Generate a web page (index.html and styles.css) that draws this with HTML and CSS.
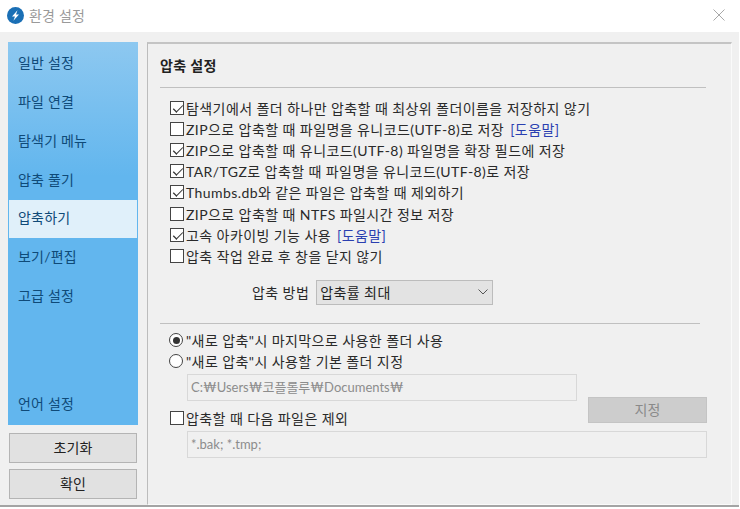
FILE: index.html
```html
<!DOCTYPE html>
<html lang="ko">
<head>
<meta charset="utf-8">
<title>환경 설정</title>
<link rel="stylesheet" href="styles.css">
</head>
<body>
<div class="window">
  <header class="titlebar">
    <svg class="logo" width="17" height="17" viewBox="0 0 17 17"><circle cx="8.500" cy="8.500" r="8.500" fill="#1a6fb5"/><path d="M10.500 3.200 5 9.400h3l-1.600 4.400 5.600-6.300H9z" fill="#fff"/></svg>
    <span class="title">환경 설정</span>
    <svg class="close" width="12" height="12" viewBox="0 0 12 12"><path d="M.5.5l11 11M11.500.5l-11 11" stroke="#a8a8a8" stroke-width="1" fill="none"/></svg>
  </header>
  <div class="body">
    <aside class="side">
      <nav class="nav">
        <div class="nav-item">일반 설정</div>
        <div class="nav-item">파일 연결</div>
        <div class="nav-item">탐색기 메뉴</div>
        <div class="nav-item">압축 풀기</div>
        <div class="nav-item active">압축하기</div>
        <div class="nav-item">보기/편집</div>
        <div class="nav-item">고급 설정</div>
        <div class="nav-item nav-last">언어 설정</div>
      </nav>
      <button class="btn">초기화</button>
      <button class="btn">확인</button>
    </aside>
    <main class="panel">
      <h1 class="heading">압축 설정</h1>
      <div class="rule rule-top"></div>
      <div class="options">
        <label class="row"><span class="box on"></span>탐색기에서 폴더 하나만 압축할 때 최상위 폴더이름을 저장하지 않기</label>
        <label class="row"><span class="box"></span>ZIP으로 압축할 때 파일명을 유니코드(UTF-8)로 저장<a class="help">[도움말]</a></label>
        <label class="row"><span class="box on"></span>ZIP으로 압축할 때 유니코드(UTF-8) 파일명을 확장 필드에 저장</label>
        <label class="row"><span class="box on"></span>TAR/TGZ로 압축할 때 파일명을 유니코드(UTF-8)로 저장</label>
        <label class="row"><span class="box on"></span>Thumbs.db와 같은 파일은 압축할 때 제외하기</label>
        <label class="row"><span class="box"></span>ZIP으로 압축할 때 NTFS 파일시간 정보 저장</label>
        <label class="row"><span class="box on"></span>고속 아카이빙 기능 사용<a class="help">[도움말]</a></label>
        <label class="row"><span class="box"></span>압축 작업 완료 후 창을 닫지 않기</label>
      </div>
      <div class="method">
        <span>압축 방법</span>
        <div class="select"><span>압축률 최대</span>
          <svg width="10" height="6" viewBox="0 0 10 6"><path d="M.5.5 5 5 9.500.5" stroke="#555" fill="none"/></svg>
        </div>
      </div>
      <div class="rule rule-mid"></div>
      <div class="folder">
        <label class="row"><span class="radio on"></span>"새로 압축"시 마지막으로 사용한 폴더 사용</label>
        <label class="row"><span class="radio"></span>"새로 압축"시 사용할 기본 폴더 지정</label>
        <div class="input path">C:₩Users₩코플롤루₩Documents₩</div>
        <div class="exclude-head">
          <label class="row"><span class="box"></span>압축할 때 다음 파일은 제외</label>
          <button class="set">지정</button>
        </div>
        <div class="input wide">*.bak; *.tmp;</div>
      </div>
    </main>
  </div>
</div>
</body>
</html>
```
FILE: styles.css
```css
* { box-sizing: border-box; }
html, body { margin: 0; padding: 0; }
body {
  width: 740px;
  height: 509px;
  overflow: hidden;
  background: #fff;
  font-family: Lato, "Noto Sans CJK KR", sans-serif;
  font-size: 14px;
  letter-spacing: .42px;
  color: #2a2a2a;
}
.window {
  width: 739px;
  display: flex;
  flex-direction: column;
  background: #f0f0f0;
  border-bottom: 2px solid #a4a4a4;
  box-sizing: content-box;
  height: 505px;
}
.titlebar {
  height: 32px;
  flex: none;
  background: #fff;
  display: flex;
  align-items: center;
  padding: 0 14px 2px 7px;
}
.logo { flex: none; }
.title { margin-left: 5px; font-size: 14px; color: #9a9a9a; letter-spacing: .2px; }
.close { margin-left: auto; }
.body {
  flex: 1;
  display: flex;
  padding: 10px 7px 7px 8px;
  gap: 9px;
}
.side { width: 130px; flex: none; display: flex; flex-direction: column; align-items: center; }
.nav {
  width: 130px;
  height: 383px;
  display: flex;
  flex-direction: column;
  background: linear-gradient(#8dc8f0, #62b6ee 35%, #62b6ee);
  padding-top: 2px;
  margin-bottom: 8px;
}
.nav-item {
  height: 39px;
  line-height: 37px;
  padding-left: 9px;
  margin: 0 1px;
  color: #0f4a78;
  font-size: 14px;
  letter-spacing: .2px;
}
.nav-item.active { background: #e0f0fa; height: 38px; line-height: 36px; }
.nav-last { margin-top: auto; margin-bottom: 1px; }
.btn {
  width: 128px;
  height: 30px;
  margin-bottom: 6px;
  background: #e1e1e1;
  border: 1px solid #b4b4b4;
  font: inherit;
  font-size: 14px;
  letter-spacing: .2px;
  color: #222;
  padding: 0 0 2px;
}
.panel {
  flex: 1;
  border-top: 2px solid #c4c4c4;
  border-left: 1px solid #bcbcbc;
  border-right: 1px solid #fafafa;
  border-bottom: 1px solid #fafafa;
  padding: 0 0 0 12px;
  display: flex;
  flex-direction: column;
}
.heading { margin: 12px 0 0; font-size: 14px; font-weight: 700; letter-spacing: .35px; line-height: 20px; color: #222; }
.rule { height: 1px; background: #c0c0c0; }
.rule-top { width: 546px; margin-top: 11px; }
.options { margin-top: 9px; padding-left: 10px; }
.row { display: flex; align-items: center; height: 21.2px; white-space: nowrap; }
.box {
  width: 14px; height: 14px; margin-right: 2px; flex: none;
  border: 1px solid #444; background: #fff; position: relative;
}
.box.on::after {
  content: "";
  position: absolute;
  left: 2.500px; top: 1px;
  width: 7px; height: 4px;
  border-left: 1px solid #333;
  border-bottom: 1px solid #333;
  transform: translateY(2px) rotate(-45deg) scaleX(1.2);
}
.help { color: #2a3fb0; margin-left: 6px; }
.method {
  display: flex; align-items: center; justify-content: flex-start;
  margin-top: 13px; padding-left: 92px; gap: 7px;
}
.select {
  width: 177px; height: 25px;
  background: #e3e3e3; border: 1px solid #bcbcbc;
  display: flex; align-items: center; justify-content: space-between;
  padding: 0 4px 0 3px; color: #222;
}
.rule-mid { width: 540px; margin-top: 18px; }
.folder { margin-top: 6px; padding-left: 10px; }
.radio {
  width: 14px; height: 14px; margin: 0 3px 0 -1px; flex: none;
  border: 1px solid #444; border-radius: 50%; background: #fff; position: relative;
}
.radio.on::after {
  content: ""; position: absolute; left: 2.500px; top: 2.500px;
  width: 7px; height: 7px; border-radius: 50%; background: #333;
}
.input {
  height: 27px; border: 1px solid #d8d8d8; background: #f0f0f0;
  color: #8c8c8c; font-size: 13px; letter-spacing: 0; line-height: 24px; padding-left: 3px;
}
.path { width: 390px; margin: 2px 0 0 17px; }
.exclude-head { display: flex; align-items: flex-start; justify-content: space-between; width: 537px; margin-top: 4px; }
.exclude-head .row { margin-top: 3px; }
.set {
  width: 119px; height: 26px; margin-top: -8px;
  background: #cdcdcd; border: 1px solid #c4c4c4;
  font: inherit; font-size: 14px; color: #8a8a8a; padding: 0 0 2px;
}
.wide { width: 520px; margin: 2px 0 0 17px; }
```
